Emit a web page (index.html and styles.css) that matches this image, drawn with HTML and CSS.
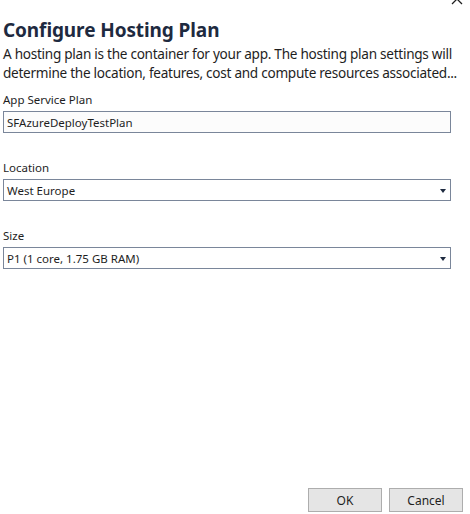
FILE: index.html
```html
<!DOCTYPE html>
<html lang="en">
  <head>
    <meta charset="UTF-8" />
    <title>Configure Hosting Plan</title>
    <link rel="stylesheet" href="styles.css">
  </head>
  <body>
    <div class="dialog">
      <button class="close" aria-label="Close">
        <svg width="14" height="14" viewBox="0 0 14 14">
          <path d="M2 2 L12 12 M12 2 L2 12" stroke="#1e1e1e" stroke-width="1.3" fill="none" />
        </svg>
      </button>

      <h1 class="title">Configure Hosting Plan</h1>
      <p class="desc">
        A hosting plan is the container for your app. The hosting plan settings will
        determine the location, features, cost and compute resources associated...
      </p>

      <div class="field">
        <label for="planInput">App Service Plan</label>
        <input id="planInput" class="textbox" type="text" value="SFAzureDeployTestPlan" />
      </div>

      <div class="field">
        <label>Location</label>
        <div class="combo">
          <span>West Europe</span>
          <span class="arrow"></span>
        </div>
      </div>

      <div class="field">
        <label>Size</label>
        <div class="combo">
          <span>P1 (1 core, 1.75 GB RAM)</span>
          <span class="arrow"></span>
        </div>
      </div>

      <div class="footer">
        <button class="button">OK</button>
        <button class="button">Cancel</button>
      </div>
    </div>
  </body>
</html>
```

FILE: styles.css
```css
html,
body {
  margin: 0;
  height: 100%;
  background: #fff;
}

body {
  font-family: "Noto Sans", "Open Sans", sans-serif;
  color: #1e1e1e;
}

.dialog {
  position: relative;
  box-sizing: border-box;
  height: 100%;
  padding: 0 19px 2px 3px;
  display: flex;
  flex-direction: column;
}

.close {
  position: absolute;
  top: -8px;
  right: 6px;
  padding: 0;
  border: none;
  background: none;
}

.title {
  margin: 17px 0 0;
  font-size: 19px;
  font-weight: bold;
  line-height: 26px;
  color: #1e2a40;
  letter-spacing: -0.1px;
}

.desc {
  margin: 1px 0 0;
  font-size: 13.6px;
  line-height: 19px;
  margin-right: -19px;
  letter-spacing: -0.28px;
}

.field {
  display: flex;
  flex-direction: column;
  margin-bottom: 13px;
}

.field:first-of-type {
  margin-top: 10px;
}

.field label {
  font-size: 11.5px;
  line-height: 16px;
  margin-bottom: 3px;
  margin-top: 14px;
}

.desc + .field label {
  margin-top: 0;
}

.textbox,
.combo {
  box-sizing: border-box;
  height: 22px;
  width: 448px;
  margin: 0;
  padding: 0 3px;
  border: 1px solid #7a869a;
  font-family: inherit;
  font-size: 11.5px;
  color: #1e1e1e;
}

.textbox {
  background: #fcfcfc;
  outline: none;
}

.combo {
  display: flex;
  align-items: center;
  justify-content: space-between;
  background: #fff;
  padding-right: 4px;
}

.arrow {
  width: 0;
  height: 0;
  border-left: 3px solid transparent;
  border-right: 3px solid transparent;
  border-top: 4px solid #1e2a40;
  margin-top: 2px;
}

.footer {
  margin-top: auto;
  display: flex;
  justify-content: flex-end;
  gap: 7px;
  margin-right: -12px;
}

.button {
  width: 74px;
  height: 24px;
  background: #e5e5e5;
  border: 1px solid #adadad;
  font-family: inherit;
  font-size: 12px;
  color: #1e1e1e;
  padding: 0;
}
```
